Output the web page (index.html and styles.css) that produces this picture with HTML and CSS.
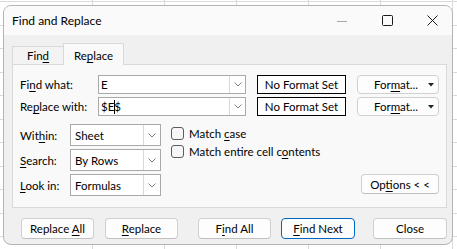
FILE: index.html
```html
<!DOCTYPE html>
<html>
<head>
    <title>Find and Replace</title>
    <link rel="stylesheet" href="styles.css">
</head>
<body>
    <div class="window">
        <div class="titlebar">
            <span class="title">Find and Replace</span>
            <div class="controls">
                <span class="ctl"><svg width="10" height="10" viewBox="0 0 10 10"><line x1="0" y1="5.5" x2="10" y2="5.5" stroke="#a8a8a8" stroke-width="1"/></svg></span>
                <span class="ctl"><svg width="11" height="11" viewBox="0 0 11 11"><rect x="0.5" y="0.5" width="10" height="10" rx="1" fill="none" stroke="#1a1a1a" stroke-width="1"/></svg></span>
                <span class="ctl"><svg width="11" height="11" viewBox="0 0 11 11"><path d="M0.5 0.5 L10.5 10.5 M10.5 0.5 L0.5 10.5" stroke="#1a1a1a" stroke-width="1" fill="none"/></svg></span>
            </div>
        </div>

        <div class="content">
            <div class="tabs">
                <div class="tab"><span>Fin<u>d</u></span></div>
                <div class="tab active"><span>Re<u>p</u>lace</span></div>
            </div>

            <div class="panel">
                <div class="frow">
                    <span class="lbl wide">Fi<u>n</u>d what:</span>
                    <div class="combo big">
                        <span class="val"><span>E</span></span>
                        <span class="arrow"><svg width="8" height="5" viewBox="0 0 8 5"><polyline points="0.5,0.5 4,4 7.5,0.5" fill="none" stroke="#808080"/></svg></span>
                    </div>
                    <div class="nofmt"><span>No Format Set</span></div>
                    <div class="fmt"><span>For<u>m</u>at...</span><svg width="6" height="4" viewBox="0 0 6 4"><path d="M0 0 H6 L3 3.5 Z" fill="#222"/></svg></div>
                </div>
                <div class="frow">
                    <span class="lbl wide">Re<u>p</u>lace with:</span>
                    <div class="combo big">
                        <span class="val"><span>$E<span class="caret"></span>$</span></span>
                        <span class="arrow"><svg width="8" height="5" viewBox="0 0 8 5"><polyline points="0.5,0.5 4,4 7.5,0.5" fill="none" stroke="#808080"/></svg></span>
                    </div>
                    <div class="nofmt"><span>No Format Set</span></div>
                    <div class="fmt"><span>For<u>m</u>at...</span><svg width="6" height="4" viewBox="0 0 6 4"><path d="M0 0 H6 L3 3.5 Z" fill="#222"/></svg></div>
                </div>

                <div class="lower">
                    <div class="selects">
                        <div class="srow">
                            <span class="lbl">Wit<u>h</u>in:</span>
                            <div class="combo small">
                                <span class="val"><span>Sheet</span></span>
                                <span class="arrow"><svg width="8" height="5" viewBox="0 0 8 5"><polyline points="0.5,0.5 4,4 7.5,0.5" fill="none" stroke="#808080"/></svg></span>
                            </div>
                        </div>
                        <div class="srow">
                            <span class="lbl"><u>S</u>earch:</span>
                            <div class="combo small">
                                <span class="val"><span>By Rows</span></span>
                                <span class="arrow"><svg width="8" height="5" viewBox="0 0 8 5"><polyline points="0.5,0.5 4,4 7.5,0.5" fill="none" stroke="#808080"/></svg></span>
                            </div>
                        </div>
                        <div class="srow">
                            <span class="lbl"><u>L</u>ook in:</span>
                            <div class="combo small">
                                <span class="val"><span>Formulas</span></span>
                                <span class="arrow"><svg width="8" height="5" viewBox="0 0 8 5"><polyline points="0.5,0.5 4,4 7.5,0.5" fill="none" stroke="#808080"/></svg></span>
                            </div>
                        </div>
                    </div>
                    <div class="checks">
                        <div class="check"><span class="box"></span><span>Match <u>c</u>ase</span></div>
                        <div class="check"><span class="box"></span><span>Match entire cell c<u>o</u>ntents</span></div>
                        <div class="btn options"><span>Op<u>t</u>ions &lt; &lt;</span></div>
                    </div>
                </div>
            </div>

            <div class="actions">
                <div class="btn b-all"><span>Replace <u>A</u>ll</span></div>
                <div class="btn b-rep"><span><u>R</u>eplace</span></div>
                <div class="btn b-fall"><span>F<u>i</u>nd All</span></div>
                <div class="btn b-next focus"><span><u>F</u>ind Next</span></div>
                <div class="btn b-close"><span>Close</span></div>
            </div>
        </div>
    </div>
</body>
</html>
```

FILE: styles.css
```css
* {
    box-sizing: border-box;
}
body {
    margin: 0;
    width: 457px;
    height: 249px;
    overflow: hidden;
    padding: 5px 4px 4px 3px;
    font-family: Lato, "Noto Sans", sans-serif;
    font-size: 11.5px;
    color: #000;
    background-color: #fff;
    background-image:
        repeating-linear-gradient(to right, transparent 0 71px, #dadada 71px 72px),
        repeating-linear-gradient(to bottom, #dadada 0 1px, transparent 1px 23.5px);
    background-position: 21px 0, 0 1px;
}
u {
    text-decoration-thickness: 1px;
    text-underline-offset: 2px;
}
.window {
    width: 450px;
    height: 240px;
    border: 1px solid #b4b4b4;
    border-radius: 8px;
    background: #f0f0f0;
    overflow: hidden;
    display: flex;
    flex-direction: column;
}
.titlebar {
    height: 29px;
    flex: none;
    background: #fafafa;
    display: flex;
    align-items: center;
    padding-left: 8px;
    font-size: 12px;
}
.controls {
    margin-left: auto;
    margin-right: 10px;
    display: flex;
    gap: 25px;
}
.ctl {
    width: 20px;
    height: 20px;
    display: flex;
    align-items: center;
    justify-content: center;
}
.content {
    flex: 1;
    padding: 8px 5px 0 8px;
}
.tabs {
    display: flex;
    align-items: flex-end;
    height: 21px;
}
.tab {
    height: 18px;
    width: 51px;
    border: 1px solid #d9d9d9;
    border-bottom: none;
    border-right: none;
    background: #f3f3f3;
    display: flex;
    align-items: center;
    justify-content: center;
}
.tab.active {
    width: 61px;
    height: 22px;
    margin-bottom: -1px;
    padding-top: 1px;
    border-right: 1px solid #d9d9d9;
    background: #f9f9f9;
    position: relative;
    z-index: 1;
}
.panel {
    height: 144px;
    border: 1px solid #d9d9d9;
    background: #f9f9f9;
    padding: 10px 7px 7px 7px;
}
.frow {
    display: flex;
    align-items: center;
    height: 19px;
    margin-bottom: 3px;
}
.lbl {
    width: 50px;
    flex: none;
}
.lbl.wide {
    width: 78px;
}
.combo {
    display: flex;
    height: 100%;
    border: 1px solid #a9a9a9;
    background: #fff;
    flex: none;
}
.combo .val {
    flex: 1;
    display: flex;
    align-items: center;
    padding-left: 2px;
}
.combo .arrow {
    width: 16px;
    border-left: 1px solid #d9d9d9;
    display: flex;
    align-items: center;
    justify-content: center;
}
.combo.big {
    width: 148px;
}
.combo.small {
    width: 91px;
}
.combo.small .val {
    padding-left: 4px;
}
.combo.small .arrow {
    width: 17px;
}
.caret {
    display: inline-block;
    width: 1px;
    height: 14px;
    background: #000;
    margin: 0 -1px 0 0;
    vertical-align: -3px;
}
.nofmt {
    width: 89px;
    height: 100%;
    margin-left: 11px;
    border: 1px solid #000;
    background: #fff;
    display: flex;
    align-items: center;
    justify-content: center;
}
.fmt {
    width: 82px;
    height: 100%;
    margin-left: 11px;
    border: 1px solid #d0d0d0;
    border-radius: 4px;
    background: #fdfdfd;
    display: flex;
    align-items: center;
    justify-content: flex-end;
    gap: 10px;
    padding-right: 4px;
}
.lower {
    display: flex;
    margin-top: 8px;
}
.selects {
    display: flex;
    flex-direction: column;
    gap: 3px;
}
.srow {
    display: flex;
    align-items: center;
    height: 22px;
}
.checks {
    flex: 1;
    margin-left: 10px;
    display: flex;
    flex-direction: column;
}
.check {
    height: 18px;
    display: flex;
    align-items: center;
}
.box {
    width: 13px;
    height: 13px;
    border: 1px solid #5c5c5c;
    border-radius: 3px;
    background: #f6f6f6;
    margin-right: 5px;
}
.btn {
    height: 21px;
    border: 1px solid #d0d0d0;
    border-bottom-color: #c0c0c0;
    border-radius: 4px;
    background: #fdfdfd;
    display: flex;
    align-items: center;
    justify-content: center;
}
.options {
    width: 78px;
    height: 20px;
    margin-top: auto;
    margin-bottom: 2px;
    align-self: flex-end;
}
.actions {
    display: flex;
    margin-top: 10px;
}
.actions .btn {
    width: 73px;
}
.b-all {
    margin-left: 9px;
}
.b-rep {
    margin-left: 11px;
}
.b-fall {
    margin-left: 20px;
}
.b-next {
    margin-left: 10px;
}
.actions .b-next, .actions .b-close {
    width: 74px;
}
.b-close {
    margin-left: 18px;
}
.btn.focus {
    border: 1px solid #0067c0;
}
```
